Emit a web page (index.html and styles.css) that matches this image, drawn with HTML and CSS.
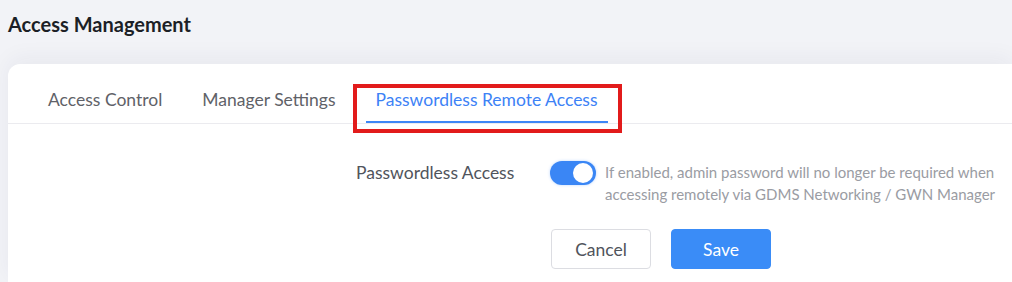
FILE: index.html
```html
<!DOCTYPE html>
<html>
<head>
<meta charset="utf-8">
<link rel="stylesheet" href="styles.css">
</head>
<body>
<div class="page">
  <h1 class="title">Access Management</h1>
  <div class="card">
    <div class="tabs">
      <div class="tab">Access Control</div>
      <div class="tab">Manager Settings</div>
      <div class="tab active">Passwordless Remote Access<span class="highlight"></span></div>
    </div>
    <div class="content">
      <div class="row">
        <div class="label">Passwordless Access</div>
        <div class="control">
          <span class="switch"><span class="knob"></span></span>
          <p class="desc">If enabled, admin password will no longer be required when accessing remotely via GDMS Networking / GWN Manager</p>
        </div>
      </div>
      <div class="actions">
        <button class="btn btn-cancel">Cancel</button>
        <button class="btn btn-save">Save</button>
      </div>
    </div>
  </div>
</div>
</body>
</html>
```
FILE: styles.css
```css
html, body {
  margin: 0;
  padding: 0;
  height: 100%;
  overflow: hidden;
}
body {
  background: #f2f3f7;
  font-family: Lato, "Open Sans", sans-serif;
}
.page {
  padding: 0 0 0 8px;
}
.title {
  margin: 0;
  padding: 12px 0 0 0;
  height: 64px;
  box-sizing: border-box;
  font-size: 20px;
  line-height: 24px;
  font-weight: 700;
  color: #1c1f26;
}
.card {
  background: #fff;
  border-radius: 12px 0 0 0;
  height: 218px;
  box-shadow: 0 -6px 22px rgba(30, 40, 80, 0.05);
  padding-top: 14px;
  box-sizing: border-box;
}
.tabs {
  display: flex;
  gap: 20px;
  padding-left: 30px;
  border-bottom: 1px solid #ebebef;
}
.tab {
  position: relative;
  padding: 0 10px;
  font-size: 17.5px;
  line-height: 43px;
  color: #5f6268;
  border-bottom: 2px solid transparent;
}
.tab.active {
  color: #3d82f6;
  border-bottom-color: #3d86f6;
}
.highlight {
  position: absolute;
  left: -13px;
  right: -14px;
  top: 6px;
  bottom: -12px;
  border: 4px solid #e21b1b;
}
.content {
  padding: 37px 0 0 348px;
}
.row {
  display: flex;
  align-items: flex-start;
}
.label {
  width: 194px;
  font-size: 17.5px;
  line-height: 24px;
  color: #50545c;
}
.control {
  display: flex;
  align-items: flex-start;
}
.switch {
  flex: none;
  width: 46px;
  height: 24px;
  border-radius: 12px;
  background: #3a86f5;
  position: relative;
  box-shadow: 0 0 3px rgba(58, 134, 245, 0.35);
}
.knob {
  position: absolute;
  right: 3px;
  top: 2px;
  width: 20px;
  height: 20px;
  border-radius: 50%;
  background: #fff;
}
.desc {
  margin: 0 0 0 9px;
  width: 400px;
  font-size: 15px;
  line-height: 22px;
  color: #9a9ca3;
}
.actions {
  display: flex;
  gap: 20px;
  padding-left: 195px;
  margin-top: 24px;
}
.btn {
  width: 100px;
  height: 40px;
  border-radius: 4px;
  font-family: Lato, "Open Sans", sans-serif;
  font-size: 17.5px;
  cursor: pointer;
}
.btn-cancel {
  background: #fff;
  border: 1px solid #dcdde2;
  color: #50545c;
}
.btn-save {
  background: #3a8cf7;
  border: 1px solid #3a8cf7;
  color: #fff;
}
```
